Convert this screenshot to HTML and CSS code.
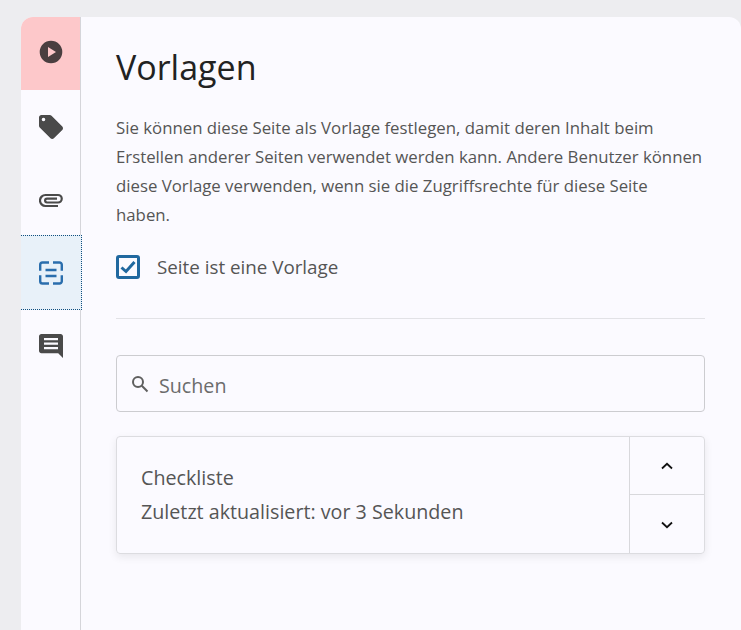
FILE: index.html

```html
<!DOCTYPE html>
<html lang="de">
<head>
    <meta charset="UTF-8">
    <meta name="viewport" content="width=device-width, initial-scale=1.0">
    <title>Vorlagen</title>
    <link rel="stylesheet" href="styles.css">
</head>
<body>
    <div class="panel">
        <nav class="rail">
            <div class="rail-item rail-item-alert">
                <svg width="24" height="24" viewBox="0 0 24 24"><path fill="#4a3f40" d="M12 .7a11.3 11.3 0 1 0 0 22.6A11.3 11.3 0 0 0 12 .7zM9 17V7l8 5z"/></svg>
            </div>
            <div class="rail-item">
                <svg width="24" height="24" viewBox="0 0 24 24"><path fill="#4a4a4a" d="M23.3 11.5 12.5.7C12 .3 11.500 0 10.800 0H2.400C1.100 0 0 1.100 0 2.400v8.400c0 .7.300 1.300.7 1.700l10.800 10.800c.4.400 1 .7 1.700.7s1.300-.3 1.700-.7l8.400-8.400c.4-.4.700-1 .7-1.700s-.3-1.300-.7-1.700zM4.500 6.300a1.800 1.800 0 1 1 0-3.600 1.800 1.800 0 0 1 0 3.600z"/></svg>
            </div>
            <div class="rail-item">
                <svg width="24" height="24" viewBox="0 0 24 24" fill="none" stroke="#4a4a4a" stroke-width="2.200"><path d="M19 18H6.500a5.300 5.300 0 0 1 0-11H19a3.700 3.700 0 0 1 0 7.500H8a1.900 1.900 0 0 1 0-3.800h10"/></svg>
            </div>
            <div class="rail-item rail-item-active">
                <svg width="24" height="24" viewBox="0 0 24 24" fill="none" stroke="#2a6ead" stroke-width="2.400"><path d="M10 1.500H3.500A2.300 2.300 0 0 0 1.200 3.800v6M14 1.500h6.500a2.300 2.300 0 0 1 2.300 2.300v6M10 22.500H3.500a2.300 2.300 0 0 1-2.300-2.300v-6M14 22.500h6.500a2.300 2.300 0 0 0 2.300-2.300v-6M6.500 9h11M6.500 15h11"/></svg>
            </div>
            <div class="rail-item">
                <svg width="24" height="24" viewBox="0 0 24 24"><path fill="#4a4a4a" d="M2.400 0h19.200C22.900 0 24 1.100 24 2.400V24l-4.800-4.800H2.400C1.100 19.200 0 18.100 0 16.800V2.400C0 1.100 1.100 0 2.400 0zM5 4v2.200h14V4zm0 4.500v2.200h14V8.500zM5 13v2.200h14V13z"/></svg>
            </div>
        </nav>
        <main class="content">
            <h1 class="title">Vorlagen</h1>
            <p class="intro">Sie können diese Seite als Vorlage festlegen, damit deren Inhalt beim Erstellen anderer Seiten verwendet werden kann. Andere Benutzer können diese Vorlage verwenden, wenn sie die Zugriffsrechte für diese Seite haben.</p>
            <label class="check-row">
                <span class="check-box">
                    <svg width="16" height="14" viewBox="0 0 16 14" fill="none" stroke="#20689f" stroke-width="3"><path d="M1.500 7.500 6 11.500 14.500 2"/></svg>
                </span>
                <span>Seite ist eine Vorlage</span>
            </label>
            <hr class="divider">
            <div class="search">
                <svg width="18" height="18" viewBox="0 0 18 18" fill="none" stroke="#5f5f5f" stroke-width="2"><circle cx="7" cy="7" r="5"/><path d="M10.800 10.800 16.500 16.500"/></svg>
                <span class="search-text">Suchen</span>
            </div>
            <div class="item">
                <div class="item-text">
                    <div>Checkliste</div>
                    <div>Zuletzt aktualisiert: vor 3 Sekunden</div>
                </div>
                <div class="item-arrows">
                    <div class="arrow">
                        <svg width="12" height="8" viewBox="0 0 12 8" fill="none" stroke="#111" stroke-width="1.800"><path d="M1 6.500 6 1.800l5 4.700"/></svg>
                    </div>
                    <div class="arrow">
                        <svg width="12" height="8" viewBox="0 0 12 8" fill="none" stroke="#111" stroke-width="1.800"><path d="M1 1.500 6 6.200l5-4.700"/></svg>
                    </div>
                </div>
            </div>
        </main>
    </div>
</body>
</html>
```

FILE: styles.css

```css
/* Base */
html, body {
    height: 100%;
}

body {
    margin: 0;
    background-color: #ededf0;
    color: #555;
    font-family: 'Open Sans', sans-serif;
    font-size: 19.7px;
    overflow: hidden;
}

/* Panel */
.panel {
    display: flex;
    height: 613px;
    margin: 17px 0 0 21px;
    background-color: #fbfaff;
    border-radius: 12px 12px 0 0;
    overflow: hidden;
}

/* Left rail */
.rail {
    width: 59px;
    flex-shrink: 0;
    border-right: 1px solid #d5d5da;
}

.rail-item {
    display: flex;
    align-items: center;
    justify-content: center;
    box-sizing: border-box;
    height: 73px;
}

.rail-item-alert {
    padding-bottom: 3px;
    background-color: #fdc8ca;
}

.rail-item-active {
    width: 61px;
    height: 75px;
    margin: -1px 0;
    padding-right: 1px;
    background-color: #e8f1f9;
    border-top: 1px dotted #0f4f80;
    border-bottom: 1px dotted #0f4f80;
    border-right: 1px dotted #0f4f80;
    position: relative;
}

/* Content */
.content {
    flex: 1;
    padding: 24px 36px 0 35px;
}

.title {
    margin: 0 0 20px;
    color: #222;
    font-size: 34px;
    font-weight: 400;
    line-height: 52px;
}

.intro {
    margin: 0;
    font-size: 16.8px;
    line-height: 29px;
}

.check-row {
    display: flex;
    align-items: center;
    gap: 17px;
    margin-top: 25px;
    font-size: 18.8px;
}

.check-box {
    display: flex;
    align-items: center;
    justify-content: center;
    box-sizing: border-box;
    width: 24px;
    height: 24px;
    border: 3px solid #20689f;
    border-radius: 3px;
}

.divider {
    margin: 38px 0 36px;
    border: none;
    border-top: 1px solid #e2e2e6;
}

.search {
    display: flex;
    align-items: center;
    gap: 10px;
    box-sizing: border-box;
    height: 57px;
    padding-left: 14px;
    border: 1px solid #ccccd0;
    border-radius: 4px;
    color: #6c6c6c;
}

.search-text {
    padding-top: 4px;
}

.item {
    display: flex;
    height: 118px;
    margin-top: 24px;
    box-sizing: border-box;
    border: 1px solid #dcdce0;
    border-radius: 4px;
    box-shadow: 0 3px 8px rgba(0, 0, 0, 0.08);
}

.item-text {
    flex: 1;
    align-self: center;
    padding-left: 24px;
    line-height: 34px;
}

.item-arrows {
    width: 74px;
    border-left: 1px solid #d8d8dc;
}

.arrow {
    display: flex;
    align-items: center;
    justify-content: center;
    height: 57px;
}

.arrow + .arrow {
    height: 59px;
    padding-top: 2px;
    box-sizing: border-box;
    border-top: 1px solid #d8d8dc;
}
```
